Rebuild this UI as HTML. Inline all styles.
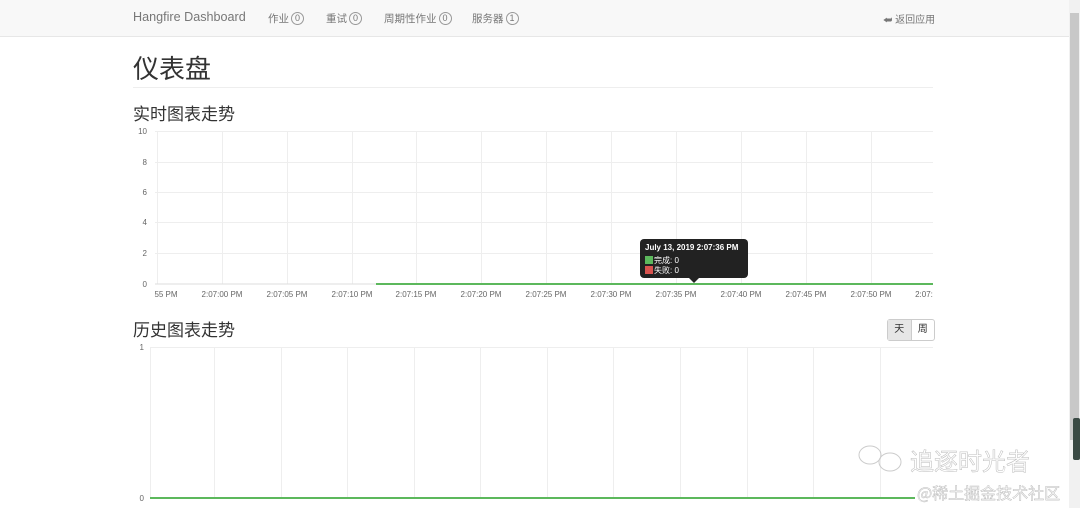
<!DOCTYPE html>
<html><head><meta charset="utf-8"><style>
body{margin:0;width:1080px;height:508px;overflow:hidden;background:#fff;font-family:"Liberation Sans","Noto Sans CJK SC",sans-serif;position:relative;color:#333}
.nav{position:absolute;left:0;top:0;width:1069px;height:36px;background:#f8f8f8;border-bottom:1px solid #e7e7e7}
.nav span{position:absolute;top:11px;font-size:10.5px;color:#777}
.badge{display:inline-block;border:1px solid #999;border-radius:7px;padding:0 3px;font-size:9px;line-height:11px;margin-left:2px;color:#777;vertical-align:1px;font-style:normal}
.abs{position:absolute}
</style></head><body>
<div class="nav">
<span style="left:133px;font-size:12.6px;top:10px">Hangfire Dashboard</span>
<span style="left:268px">作业<i class="badge">0</i></span>
<span style="left:326px">重试<i class="badge">0</i></span>
<span style="left:384px">周期性作业<i class="badge">0</i></span>
<span style="left:472px">服务器<i class="badge">1</i></span>
<span style="left:883px;font-size:10px">⮨ 返回应用</span>
</div>
<div class="abs" style="left:133px;top:49px;font-size:26px;color:#333">仪表盘</div>
<div class="abs" style="left:133px;top:87px;width:800px;border-top:1px solid #eee"></div>
<div class="abs" style="left:133px;top:100px;font-size:17px">实时图表走势</div>
<div class="abs" style="left:133px;top:316px;font-size:17px">历史图表走势</div>
<div class="abs" style="left:887px;top:319px;width:46px;height:20px;border:1px solid #ccc;border-radius:3px;font-size:10px;display:flex">
<div style="width:23px;background:#e6e6e6;text-align:center;line-height:20px;border-right:1px solid #ccc">天</div><div style="width:23px;text-align:center;line-height:20px">周</div></div>
<svg class="abs" style="left:0;top:0" width="1069" height="508" font-family="Liberation Sans" font-size="8" fill="#666">
<g stroke="#eee" stroke-width="1">
<line x1="155" y1="131.5" x2="933" y2="131.5"/><line x1="155" y1="162.5" x2="933" y2="162.5"/><line x1="155" y1="192.5" x2="933" y2="192.5"/><line x1="155" y1="222.5" x2="933" y2="222.5"/><line x1="155" y1="253.5" x2="933" y2="253.5"/>
<line x1="157.5" y1="131" x2="157.5" y2="284"/><line x1="222.5" y1="131" x2="222.5" y2="284"/><line x1="287.5" y1="131" x2="287.5" y2="284"/><line x1="352.5" y1="131" x2="352.5" y2="284"/><line x1="416.5" y1="131" x2="416.5" y2="284"/><line x1="481.5" y1="131" x2="481.5" y2="284"/><line x1="546.5" y1="131" x2="546.5" y2="284"/><line x1="611.5" y1="131" x2="611.5" y2="284"/><line x1="676.5" y1="131" x2="676.5" y2="284"/><line x1="741.5" y1="131" x2="741.5" y2="284"/><line x1="806.5" y1="131" x2="806.5" y2="284"/><line x1="871.5" y1="131" x2="871.5" y2="284"/>
<line x1="150" y1="347.5" x2="933" y2="347.5"/>
<line x1="150.5" y1="347" x2="150.5" y2="498"/><line x1="214.5" y1="347" x2="214.5" y2="498"/><line x1="281.5" y1="347" x2="281.5" y2="498"/><line x1="347.5" y1="347" x2="347.5" y2="498"/><line x1="414.5" y1="347" x2="414.5" y2="498"/><line x1="480.5" y1="347" x2="480.5" y2="498"/><line x1="547.5" y1="347" x2="547.5" y2="498"/><line x1="613.5" y1="347" x2="613.5" y2="498"/><line x1="680.5" y1="347" x2="680.5" y2="498"/><line x1="747.5" y1="347" x2="747.5" y2="498"/><line x1="813.5" y1="347" x2="813.5" y2="498"/><line x1="880.5" y1="347" x2="880.5" y2="498"/>
</g>
<line x1="155" y1="284" x2="933" y2="284" stroke="#ddd"/>
<line x1="376" y1="284" x2="933" y2="284" stroke="#5cb85c" stroke-width="2"/>
<line x1="150" y1="498" x2="915" y2="498" stroke="#5cb85c" stroke-width="2"/>
<g text-anchor="end"><text x="147" y="134">10</text><text x="147" y="165">8</text><text x="147" y="195">6</text><text x="147" y="225">4</text><text x="147" y="256">2</text><text x="147" y="287">0</text><text x="144" y="350">1</text><text x="144" y="501">0</text></g>
<g text-anchor="middle"><text x="166" y="297">55 PM</text><text x="222" y="297">2:07:00 PM</text><text x="287" y="297">2:07:05 PM</text><text x="352" y="297">2:07:10 PM</text><text x="416" y="297">2:07:15 PM</text><text x="481" y="297">2:07:20 PM</text><text x="546" y="297">2:07:25 PM</text><text x="611" y="297">2:07:30 PM</text><text x="676" y="297">2:07:35 PM</text><text x="741" y="297">2:07:40 PM</text><text x="806" y="297">2:07:45 PM</text><text x="871" y="297">2:07:50 PM</text><text x="924" y="297">2:07:</text></g>
<rect x="640" y="239" width="108" height="39" rx="4" fill="#222"/>
<path d="M689 278 L694 283 L699 278Z" fill="#222"/>
<text x="645" y="250" fill="#fff" font-weight="bold">July 13, 2019 2:07:36 PM</text>
<rect x="645" y="256" width="8" height="8" fill="#5cb85c"/><rect x="645" y="266" width="8" height="8" fill="#d9534f"/>
<text x="654" y="263" fill="#fff" font-family="Liberation Sans,Noto Sans CJK SC">完成: 0</text>
<text x="654" y="273" fill="#fff" font-family="Liberation Sans,Noto Sans CJK SC">失败: 0</text>
<text x="910" y="470" font-size="24" fill="#fff" stroke="#bbb" stroke-width="0.5" font-family="Noto Sans CJK SC">追逐时光者</text>
<text x="917" y="499" font-size="16" fill="#fff" stroke="#bbb" stroke-width="0.5" font-family="Noto Sans CJK SC">@稀土掘金技术社区</text>
<g fill="none" stroke="#ccc" stroke-width="1"><ellipse cx="870" cy="455" rx="11" ry="9"/><ellipse cx="890" cy="462" rx="11" ry="9"/></g>
</svg>
<div class="abs" style="left:1069px;top:0;width:11px;height:508px;background:#f1f1f1"></div>
<div class="abs" style="left:1070px;top:13px;width:9px;height:427px;background:#c8c8c8"></div>
<div class="abs" style="left:1073px;top:418px;width:7px;height:42px;background:#3a4a44;border-radius:2px"></div>
</body></html>
